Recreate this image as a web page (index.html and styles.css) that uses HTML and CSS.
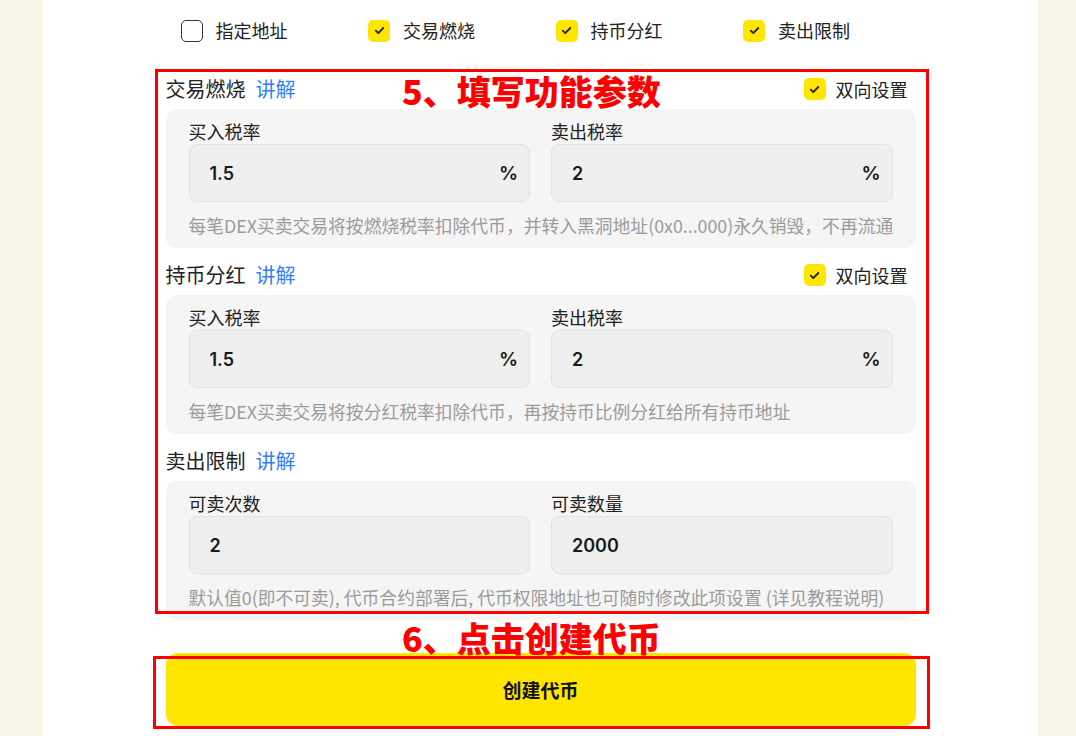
FILE: index.html
```html
<!DOCTYPE html>
<html>
<head>
	<title>创建代币</title>
	<meta charset="UTF-8">
	<meta name="viewport" content="width=device-width, initial-scale=1">
	<link rel="stylesheet" href="styles.css">
</head>
<body>
	<div class="panel">
		<div class="content">
			<div class="features">
				<label class="check">
					<span class="box"></span><span>指定地址</span>
				</label>
				<label class="check">
					<span class="box on"><svg viewBox="0 0 12 12"><path d="M2.6 6.2l2.3 2.3 4.6-4.8"/></svg></span><span>交易燃烧</span>
				</label>
				<label class="check">
					<span class="box on"><svg viewBox="0 0 12 12"><path d="M2.6 6.2l2.3 2.3 4.6-4.8"/></svg></span><span>持币分红</span>
				</label>
				<label class="check">
					<span class="box on"><svg viewBox="0 0 12 12"><path d="M2.6 6.2l2.3 2.3 4.6-4.8"/></svg></span><span>卖出限制</span>
				</label>
			</div>

			<div class="section">
				<div class="sec-head">
					<div class="sec-title">交易燃烧<a class="help">讲解</a></div>
					<label class="check small">
						<span class="box on"><svg viewBox="0 0 12 12"><path d="M2.6 6.2l2.3 2.3 4.6-4.8"/></svg></span><span>双向设置</span>
					</label>
				</div>
				<div class="card">
					<div class="fields">
						<div class="field">
							<div class="field-label">买入税率</div>
							<div class="input"><span>1.5</span><span class="unit">%</span></div>
						</div>
						<div class="field">
							<div class="field-label">卖出税率</div>
							<div class="input"><span>2</span><span class="unit">%</span></div>
						</div>
					</div>
					<div class="hint">每笔DEX买卖交易将按燃烧税率扣除代币，并转入黑洞地址(0x0...000)永久销毁，不再流通</div>
				</div>
			</div>

			<div class="section">
				<div class="sec-head">
					<div class="sec-title">持币分红<a class="help">讲解</a></div>
					<label class="check small">
						<span class="box on"><svg viewBox="0 0 12 12"><path d="M2.6 6.2l2.3 2.3 4.6-4.8"/></svg></span><span>双向设置</span>
					</label>
				</div>
				<div class="card">
					<div class="fields">
						<div class="field">
							<div class="field-label">买入税率</div>
							<div class="input"><span>1.5</span><span class="unit">%</span></div>
						</div>
						<div class="field">
							<div class="field-label">卖出税率</div>
							<div class="input"><span>2</span><span class="unit">%</span></div>
						</div>
					</div>
					<div class="hint">每笔DEX买卖交易将按分红税率扣除代币，再按持币比例分红给所有持币地址</div>
				</div>
			</div>

			<div class="section">
				<div class="sec-head">
					<div class="sec-title">卖出限制<a class="help">讲解</a></div>
				</div>
				<div class="card">
					<div class="fields">
						<div class="field">
							<div class="field-label">可卖次数</div>
							<div class="input"><span>2</span></div>
						</div>
						<div class="field">
							<div class="field-label">可卖数量</div>
							<div class="input"><span>2000</span></div>
						</div>
					</div>
					<div class="hint">默认值0(即不可卖), 代币合约部署后, 代币权限地址也可随时修改此项设置 (详见教程说明)</div>
				</div>
			</div>

			<button class="btn-create">创建代币</button>
		</div>

		<!-- tutorial annotations -->
		<div class="mark mark-params"></div>
		<div class="mark-text text-params">5、填写功能参数</div>
		<div class="mark mark-btn"></div>
		<div class="mark-text text-btn">6、点击创建代币</div>
	</div>
</body>
</html>
```

FILE: styles.css
```css
* {
	margin: 0;
	padding: 0;
	box-sizing: border-box;
}

html, body {
	width: 100%;
	height: 100%;
	overflow: hidden;
	background: #f8f5e7;
	font-family: "Noto Sans CJK SC", "Noto Sans", sans-serif;
	color: #222;
}

.panel {
	position: relative;
	width: 995px;
	min-height: 100%;
	margin-left: 43px;
	background: white;
}

.content {
	width: 750px;
	margin: 0 auto;
	padding-top: 19px;
}

.features {
	display: grid;
	grid-template-columns: repeat(4, 1fr);
	height: 23px;
	margin-bottom: 32px;
}

.check {
	display: flex;
	align-items: center;
	gap: 13px;
	padding-left: 15px;
	font-size: 18px;
	line-height: 23px;
}

.check.small {
	padding-left: 0;
	padding-right: 8px;
	gap: 10px;
}

.box {
	width: 22px;
	height: 22px;
	flex: none;
	border: 1.5px solid #333;
	border-radius: 5px;
	display: flex;
	align-items: center;
	justify-content: center;
}

.box.on {
	border: none;
	background: #ffe600;
}

.box svg {
	width: 13px;
	height: 13px;
	fill: none;
	stroke: #222;
	stroke-width: 1.7;
	stroke-linecap: round;
	stroke-linejoin: round;
}

.section {
	margin-bottom: 12px;
}

.sec-head {
	height: 30px;
	margin-bottom: 5px;
	display: flex;
	align-items: center;
	justify-content: space-between;
}

.sec-title {
	font-size: 20px;
	line-height: 30px;
}

.help {
	margin-left: 10px;
	color: #2f80ff;
}

.card {
	background: #f5f5f5;
	border-radius: 10px;
	padding: 10px 23px 11px;
}

.fields {
	display: grid;
	grid-template-columns: 1fr 1fr;
	gap: 21px;
}

.field-label {
	font-size: 18px;
	line-height: 24px;
	margin-bottom: 1px;
}

.input {
	height: 58px;
	background: #efefef;
	border: 1px solid #e2e2e2;
	border-radius: 8px;
	padding: 0 11px 0 20px;
	display: flex;
	align-items: center;
	justify-content: space-between;
	font-family: "Inter", "Noto Sans", sans-serif;
	font-weight: 600;
	font-size: 18px;
	color: #1a1a1a;
}

.unit {
	font-size: 19px;
}

.hint {
	margin-top: 11px;
	font-size: 17.8px;
	line-height: 24px;
	color: #9b9b9b;
	white-space: nowrap;
}

.btn-create {
	display: block;
	width: 100%;
	height: 73px;
	margin-top: 33px;
	border: none;
	border-radius: 12px;
	background: #ffe600;
	font-family: "Noto Sans CJK SC", sans-serif;
	font-weight: 700;
	font-size: 19px;
	color: #111;
}

.mark {
	position: absolute;
	border: 3px solid #ff0000;
}

.mark-params {
	left: 112px;
	top: 69px;
	width: 774px;
	height: 545px;
}

.mark-btn {
	left: 110px;
	top: 656px;
	width: 777px;
	height: 73px;
}

.mark-text {
	position: absolute;
	left: 359px;
	color: #ff0000;
	font-weight: 900;
	font-size: 34px;
	line-height: 40px;
	white-space: nowrap;
}

.text-params {
	top: 71px;
}

.text-btn {
	top: 618px;
}
```
